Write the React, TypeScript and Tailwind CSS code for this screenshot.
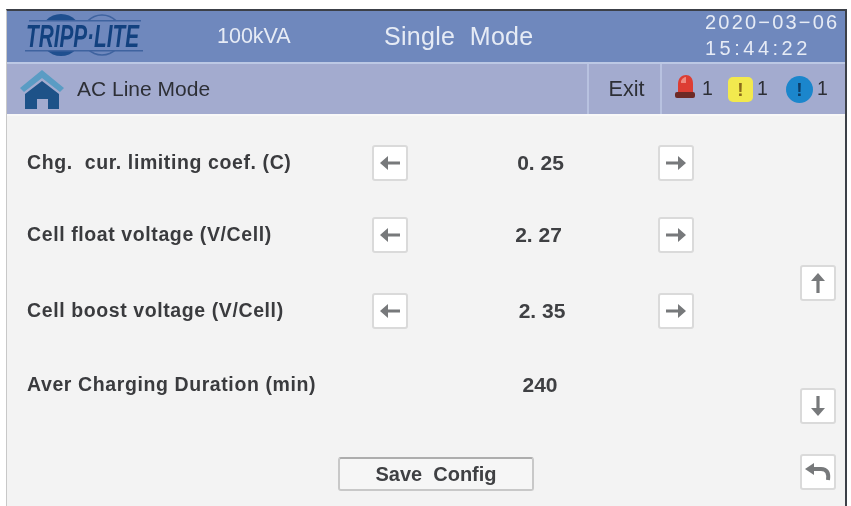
import type { ReactNode } from "react"

const font = "font-['Liberation_Sans',Arial,sans-serif]"

function ArrowIcon({ rotate = 0 }: { rotate?: number }) {
  return (
    <svg width="22" height="22" viewBox="0 0 22 22" style={{ transform: `rotate(${rotate}deg)` }}>
      <path d="M1 11 L9 4 V9.4 H21 V12.6 H9 V18 Z" fill="#77797b" />
    </svg>
  )
}

function BackIcon() {
  return (
    <svg width="28" height="22" viewBox="0 0 28 22">
      <path d="M1 8 L10 2 V14 Z" fill="#77797b" />
      <path d="M9 8 H17 C23 8 25 12 24 19" fill="none" stroke="#77797b" strokeWidth="4" />
    </svg>
  )
}

function IconButton({ children }: { children: ReactNode }) {
  return (
    <button className="flex h-9 w-9 items-center justify-center rounded-[3px] border-2 border-[#dadada] bg-white">
      {children}
    </button>
  )
}

function Logo() {
  return (
    <svg width="122" height="46" viewBox="0 0 122 46" className="overflow-visible">
      <circle cx="38" cy="21" r="21" fill="#1f4f8f" />
      <circle cx="79" cy="21" r="20" fill="none" stroke="#3f639f" strokeWidth="1.5" />
      <rect x="-2" y="6" width="124" height="31" fill="#6f88bd" />
      <rect x="6" y="6" width="112" height="1.5" fill="#3f639f" />
      <rect x="2" y="36" width="118" height="1.5" fill="#3f639f" />
      <text
        x="3"
        y="32.5"
        textLength="113"
        lengthAdjust="spacingAndGlyphs"
        fontFamily="Liberation Sans"
        fontWeight="700"
        fontStyle="italic"
        fontSize="32"
        fill="#12417f"
      >
        TRIPP·LITE
      </text>
    </svg>
  )
}

function HomeIcon() {
  return (
    <svg width="46" height="44" viewBox="0 0 46 44">
      <path d="M1 21 L23 3 L45 21 L41 25 L23 11 L5 25 Z" fill="#5a9cc4" />
      <path d="M23 14 L40 27 V42 H29 V32 H18 V42 H6 V27 Z" fill="#1d5288" />
    </svg>
  )
}

function Siren() {
  return (
    <svg width="21" height="24" viewBox="0 0 21 24" className="mb-[4px]">
      <path d="M3 18 V9 C3 3 7 0 11 0 C15 0 18 3 18 9 V18 Z" fill="#dd3d33" />
      <path d="M6 6 C7 4 9 2 11 2 V8 H6 Z" fill="#ef8a80" />
      <rect x="0" y="17" width="20" height="6" rx="2" fill="#6d2a26" />
    </svg>
  )
}

function Warning() {
  return (
    <div className="flex h-[25px] w-[25px] items-center justify-center rounded-[5px] bg-[#f2e94e] text-[19px] font-bold leading-none text-[#8a6a1a]">
      !
    </div>
  )
}

function InfoDot() {
  return (
    <div className="flex h-[27px] w-[27px] items-center justify-center rounded-full bg-[#1b86cc] text-[19px] font-bold leading-none text-[#0c3c66]">
      !
    </div>
  )
}

type Row = { label: string; value: string; arrows: boolean; height: string; shift: string }

const rows: Row[] = [
  { label: "Chg.  cur. limiting coef. (C)", value: "0. 25", arrows: true, height: "h-[72px]", shift: "pl-[15px]" },
  { label: "Cell float voltage (V/Cell)", value: "2. 27", arrows: true, height: "h-[76px]", shift: "pl-[11px]" },
  { label: "Cell boost voltage (V/Cell)", value: "2. 35", arrows: true, height: "h-[74px]", shift: "pl-[18px]" },
  { label: "Aver Charging Duration (min)", value: "240", arrows: false, height: "h-[72px]", shift: "pl-[14px]" },
]

export default function App() {
  return (
    <div className={`h-[506px] w-[851px] overflow-hidden bg-white pl-[6px] pr-1 pt-[9px] blur-[0.6px] ${font}`}>
      <div className="flex h-[497px] w-[841px] flex-col border-r-2 border-t-2 border-l border-[#3c4048] border-l-[#c8c8c8] bg-[#f3f3f3]">
        <header className="flex h-[51px] items-center bg-[#6f88bd] text-[#e6ebf5]">
          <div className="ml-[16px] w-[125px]">
            <Logo />
          </div>
          <span className="ml-[69px] w-[167px] text-[21.5px]">100kVA</span>
          <span className="whitespace-pre text-[25px] tracking-[0.3px]">Single  Mode</span>
          <div className="mb-[3px] ml-auto mr-[6px] w-[134px] text-[20px] leading-[26px]">
            <div className="tracking-[2.2px]">2020−03−06</div>
            <div className="tracking-[3.5px]">15:44:22</div>
          </div>
        </header>
        <div className="flex h-[52px] items-stretch border-t-2 border-[#bcc8e4] bg-[#a3abcf] text-[#2d2f36]">
          <div className="flex flex-1 items-center pl-[12px]">
            <HomeIcon />
            <span className="ml-[12px] text-[21px]">AC Line Mode</span>
          </div>
          <div className="flex w-[75px] items-center justify-center border-x-2 border-[#b8c2e0] pl-1 text-[21.5px]">
            Exit
          </div>
          <div className="flex w-[183px] items-center pl-[13px] text-[19.5px]">
            <Siren />
            <span className="ml-[6px] w-[26px]">1</span>
            <Warning />
            <span className="ml-[4px] w-[29px]">1</span>
            <InfoDot />
            <span className="ml-[4px]">1</span>
          </div>
        </div>
        <main className="flex flex-1 border-t-2 border-[#f8f8f8]">
          <div className="flex flex-1 flex-col pt-[29px]">
            {rows.map((r) => (
              <div key={r.label} className={`flex items-start ${r.height}`}>
                <div className="flex h-9 w-[365px] items-center whitespace-pre pl-[20px] text-[19.5px] font-bold tracking-[0.6px] text-[#3a3b3e]">
                  {r.label}
                </div>
                <div className="w-9">
                  {r.arrows && (
                    <IconButton>
                      <ArrowIcon />
                    </IconButton>
                  )}
                </div>
                <div className={`flex h-9 w-[250px] items-center justify-center text-[21px] font-bold text-[#3f4043] ${r.shift}`}>
                  {r.value}
                </div>
                {r.arrows && (
                  <IconButton>
                    <ArrowIcon rotate={180} />
                  </IconButton>
                )}
              </div>
            ))}
            <div className="mt-[18px] pl-[331px]">
              <button className="h-[34px] w-[196px] rounded-[3px] border-2 border-[#c8c8c8] border-t-[#adadad] bg-[#f6f6f6] text-[20px] font-bold text-[#3f4043]">
                <span className="whitespace-pre">Save  Config</span>
              </button>
            </div>
          </div>
          <aside className="flex w-[45px] flex-col pt-[149px]">
            <IconButton>
              <ArrowIcon rotate={90} />
            </IconButton>
            <div className="mt-[87px]">
              <IconButton>
                <ArrowIcon rotate={-90} />
              </IconButton>
            </div>
            <div className="mt-[30px]">
              <IconButton>
                <BackIcon />
              </IconButton>
            </div>
          </aside>
        </main>
      </div>
    </div>
  )
}
